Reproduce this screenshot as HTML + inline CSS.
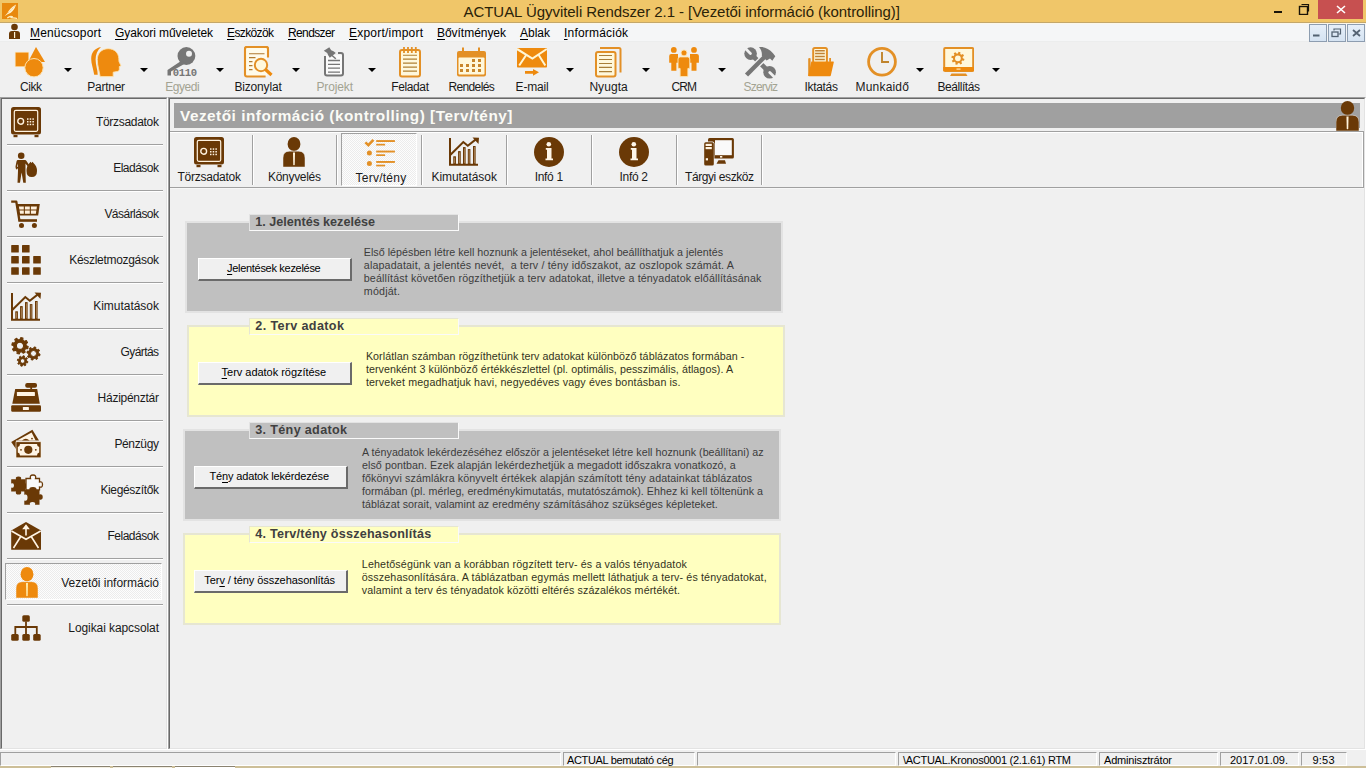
<!DOCTYPE html><html><head><meta charset="utf-8"><style>
*{margin:0;padding:0;box-sizing:border-box}
html,body{width:1366px;height:768px;overflow:hidden;background:#f0f0f0;font-family:"Liberation Sans",sans-serif;color:#000}
.a{position:absolute;display:block}
.t{position:absolute;white-space:pre;line-height:1}
.arr{position:absolute;width:0;height:0;border-left:4px solid transparent;border-right:4px solid transparent;border-top:4px solid #000}
</style></head><body>
<div class="a" style="left:0;top:0;width:1366px;height:22px;background:#f0c669"></div>
<div class="a" style="left:0;top:22px;width:1366px;height:1px;background:#c4a76a"></div>
<div class="a" style="left:0;top:23px;width:1366px;height:1px;background:#fcf7ea"></div>
<svg class="a" style="left:2px;top:3px" width="16" height="16" viewBox="0 0 16 16"><rect x="0" y="0" width="16" height="16" fill="#e8890e"/><path d="M2.5 13.2 L5.5 10 C6.5 7.5 9.5 4 14 1.5 C13.3 4.5 11.5 7.5 8.8 9.8 L5.2 11.4 Z" fill="#fff3cf"/><path d="M6.3 9.6 L12.6 3.2" stroke="#eaa040" stroke-width="0.7" stroke-dasharray="1.2 1.6"/><path d="M5.3 15 C6.8 13.6 8.6 13 10.2 13.6 C9.6 14.3 9 14.6 8.5 14.8 C11 15 13 14.7 15.2 15.4" stroke="#fff0c0" stroke-width="1.1" fill="none"/></svg>
<div class="t" style="left:463.50px;top:4.10px;font-size:15px;color:#2a2208;letter-spacing:-0.049px;">ACTUAL Ügyviteli Rendszer 2.1 - [Vezetői információ (kontrolling)]</div>
<div class="a" style="left:1274px;top:11px;width:8px;height:2px;background:#1a1408"></div>
<svg class="a" style="left:1298px;top:3px" width="12" height="12" viewBox="0 0 12 12"><rect x="1.5" y="3.5" width="8" height="8" fill="none" stroke="#1a1408" stroke-width="1.4"/><path d="M3.5 1.5 H10.5 V8.5" fill="none" stroke="#1a1408" stroke-width="1.2"/></svg>
<div class="a" style="left:1318px;top:0;width:45px;height:19px;background:#c75050"></div>
<svg class="a" style="left:1336px;top:5px" width="10" height="9" viewBox="0 0 10 9"><path d="M1 1 L9 8 M9 1 L1 8" stroke="#fff" stroke-width="1.6"/></svg>
<div class="a" style="left:0;top:24px;width:1366px;height:17px;background:#f5f6f7"></div>
<div class="a" style="left:0;top:41px;width:1366px;height:1px;background:#eceded"></div>
<svg class="a" style="left:9px;top:23px" width="12" height="17" viewBox="0 0 12 17"><circle cx="5.5" cy="4" r="3.3" fill="#6a3906"/><path d="M0 16 V11 Q0 8 3 8 H8 Q11 8 11 11 V16 Z" fill="#6a3906"/><rect x="5" y="9" width="1.2" height="6" fill="#fff4d8"/></svg>
<div class="t" style="left:30px;top:27.14px;font-size:12px;letter-spacing:0.163px"><span style="text-decoration:underline;text-underline-offset:2px">M</span>enücsoport</div>
<div class="t" style="left:115px;top:27.14px;font-size:12px;letter-spacing:-0.086px"><span style="text-decoration:underline;text-underline-offset:2px">G</span>yakori műveletek</div>
<div class="t" style="left:227px;top:27.14px;font-size:12px;letter-spacing:-0.622px"><span style="text-decoration:underline;text-underline-offset:2px">E</span>szközök</div>
<div class="t" style="left:288px;top:27.14px;font-size:12px;letter-spacing:-0.622px"><span style="text-decoration:underline;text-underline-offset:2px">R</span>endszer</div>
<div class="t" style="left:349px;top:27.14px;font-size:12px;letter-spacing:0.220px"><span style="text-decoration:underline;text-underline-offset:2px">E</span>xport/import</div>
<div class="t" style="left:437px;top:27.14px;font-size:12px;letter-spacing:-0.036px"><span style="text-decoration:underline;text-underline-offset:2px">B</span>ővítmények</div>
<div class="t" style="left:520px;top:27.14px;font-size:12px;letter-spacing:-0.004px"><span style="text-decoration:underline;text-underline-offset:2px">A</span>blak</div>
<div class="t" style="left:564px;top:27.14px;font-size:12px;letter-spacing:0.198px"><span style="text-decoration:underline;text-underline-offset:2px">I</span>nformációk</div>
<div class="a" style="left:1309px;top:24px;width:18px;height:18px;border:1px solid #8d9db0;background:linear-gradient(#e6eff9,#d5e3f2)"></div>
<div class="a" style="left:1328px;top:24px;width:18px;height:18px;border:1px solid #8d9db0;background:linear-gradient(#e6eff9,#d5e3f2)"></div>
<div class="a" style="left:1347px;top:24px;width:18px;height:18px;border:1px solid #8d9db0;background:linear-gradient(#e6eff9,#d5e3f2)"></div>
<svg class="a" style="left:1313px;top:34px" width="8" height="3" viewBox="0 0 8 3"><rect x="0" y="0.5" width="6.5" height="2" fill="#536272"/></svg>
<svg class="a" style="left:1331px;top:28px" width="11" height="10" viewBox="0 0 11 10"><rect x="1" y="4" width="6" height="4.5" fill="none" stroke="#536272" stroke-width="1.3"/><path d="M3 2.5 V1 H9.5 V6 H7.5" fill="none" stroke="#536272" stroke-width="1.2"/></svg>
<svg class="a" style="left:1352px;top:29px" width="9" height="8" viewBox="0 0 9 8"><path d="M1 1 L8 7 M8 1 L1 7" stroke="#536272" stroke-width="1.8"/></svg>
<div class="t" style="left:20.00px;top:80.74px;font-size:12px;color:#1a1a1a;letter-spacing:-0.444px;">Cikk</div>
<div class="t" style="left:87.30px;top:80.74px;font-size:12px;color:#1a1a1a;letter-spacing:-0.259px;">Partner</div>
<div class="t" style="left:165.20px;top:80.74px;font-size:12px;color:#a3a392;letter-spacing:-0.418px;">Egyedi</div>
<div class="t" style="left:234.40px;top:80.74px;font-size:12px;color:#1a1a1a;letter-spacing:-0.161px;">Bizonylat</div>
<div class="t" style="left:316.50px;top:80.74px;font-size:12px;color:#a3a392;letter-spacing:-0.141px;">Projekt</div>
<div class="t" style="left:391.30px;top:80.74px;font-size:12px;color:#1a1a1a;letter-spacing:-0.388px;">Feladat</div>
<div class="t" style="left:448.40px;top:80.74px;font-size:12px;color:#1a1a1a;letter-spacing:-0.614px;">Rendelés</div>
<div class="t" style="left:515.60px;top:80.74px;font-size:12px;color:#1a1a1a;letter-spacing:-0.200px;">E-mail</div>
<div class="t" style="left:589.40px;top:80.74px;font-size:12px;color:#1a1a1a;letter-spacing:0.056px;">Nyugta</div>
<div class="t" style="left:671.40px;top:80.74px;font-size:12px;color:#1a1a1a;letter-spacing:-0.914px;">CRM</div>
<div class="t" style="left:743.50px;top:80.74px;font-size:12px;color:#a3a392;letter-spacing:-0.790px;">Szerviz</div>
<div class="t" style="left:804.50px;top:80.74px;font-size:12px;color:#1a1a1a;letter-spacing:-0.325px;">Iktatás</div>
<div class="t" style="left:855.50px;top:80.74px;font-size:12px;color:#1a1a1a;letter-spacing:0.196px;">Munkaidő</div>
<div class="t" style="left:937.50px;top:80.74px;font-size:12px;color:#1a1a1a;letter-spacing:-0.441px;">Beállítás</div>
<div class="arr" style="left:64px;top:68px"></div>
<div class="arr" style="left:140px;top:68px"></div>
<div class="arr" style="left:216px;top:68px"></div>
<div class="arr" style="left:292px;top:68px"></div>
<div class="arr" style="left:368px;top:68px"></div>
<div class="arr" style="left:566px;top:68px"></div>
<div class="arr" style="left:642px;top:68px"></div>
<div class="arr" style="left:718px;top:68px"></div>
<div class="arr" style="left:916px;top:68px"></div>
<div class="arr" style="left:992px;top:68px"></div>
<svg class="a" style="left:14px;top:46px" width="32" height="32" viewBox="0 0 32 32"><rect x="1.2" y="6.2" width="13.6" height="14.5" fill="#ee8a0e" stroke="#fde2ae" stroke-width="0.6"/><path d="M22 1 L31 16 L14 16 Z" fill="#ee8a0e"/><circle cx="20" cy="21.7" r="9.2" fill="#ee8a0e" stroke="#fde2ae" stroke-width="1"/></svg>
<svg class="a" style="left:90px;top:46px" width="32" height="32" viewBox="0 0 32 32"><path d="M4.2 28.7 C3 22 1.2 17.5 1.2 13 C1.2 6 5 2.2 11 1 C7.5 4.2 5.6 8.5 5.6 13.5 C5.6 19 7.7 24 7.7 28.7 Z" fill="#ee8a0e"/><path d="M10.1 30.6 C9.6 26 7.3 20 7.3 13.5 C7.3 6.8 12 2.7 18.2 2.7 C24.6 2.7 28.6 7 28.8 12.5 L29 15.6 L31 19.8 L29.3 20.6 L29.4 23.2 C29.1 25 27.6 25.7 26 25.7 L23.2 26.2 V30.6 Z" fill="#ee8a0e" stroke="#fde2ae" stroke-width="0.9"/></svg>
<svg class="a" style="left:166px;top:46px" width="32" height="32" viewBox="0 0 32 32"><circle cx="20.4" cy="10" r="8.9" fill="#767676"/><circle cx="23" cy="7.8" r="3" fill="#f0f0f0"/><path d="M15 15 L1.5 24 V29.5 H5 V25.5 L20 17 Z" fill="#767676"/><text x="6.8" y="29.9" font-family="Liberation Mono" font-weight="bold" font-size="10.6" fill="#767676" letter-spacing="-0.4">0110</text></svg>
<svg class="a" style="left:243px;top:46px" width="32" height="32" viewBox="0 0 32 32"><path d="M2 3 Q2 1 4 1 H23.5 Q25 1 25 3 V10" fill="none" stroke="#e39026" stroke-width="2"/><path d="M3 2 H24 V30 H3 Z" fill="#fffbea"/><path d="M25 11.6 V3 Q25 1 23 1 H4 Q2 1 2 3 V28.5 Q2 30.5 4 30.5 H22.6" fill="none" stroke="#e39026" stroke-width="2.1"/><path d="M6 7.7 H21.5 M6 11.6 H12.5 M6 15.6 H9.5 M6 19.6 H9.5 M6 23.6 H9.5" stroke="#b07a30" stroke-width="1.1"/><circle cx="18" cy="19" r="6.2" fill="#fff8dc" stroke="#e39026" stroke-width="2"/><path d="M22.5 23.5 L28.5 29" stroke="#ee8a0e" stroke-width="3.2"/></svg>
<svg class="a" style="left:323px;top:46px" width="24" height="32" viewBox="0 0 24 32"><path d="M3 9 H19 V28.6 H3 Z" fill="#fbfbfb"/><path d="M2 10 V27.6 Q2 29.6 4 29.6 H18 Q20 29.6 20 27.6 V9 Q20 7 18 7 H15" fill="none" stroke="#767676" stroke-width="2"/><path d="M5 14.5 H17 M5 18.3 H17 M5 22.2 H17 M5 26.2 H17" stroke="#767676" stroke-width="1.3"/><path d="M0.8 4.8 L6.3 1.2 L8.2 4.2 L10.5 5.2 L12.8 6.9 L6.8 11.8 L5.3 9.4 L4.2 7 Z" fill="#767676"/><path d="M8.5 9 L12.8 12.8" stroke="#767676" stroke-width="1.5"/></svg>
<svg class="a" style="left:398px;top:46px" width="24" height="32" viewBox="0 0 24 32"><rect x="2" y="4" width="20" height="26.5" rx="2" fill="#fff8dc" stroke="#e39026" stroke-width="2"/><path d="M6 1 V7 M10 1 V7 M13.8 1 V7 M17.8 1 V7" stroke="#e39026" stroke-width="1.8"/><path d="M5 9.25 H19 M5 13.2 H19 M5 17.2 H19 M5 21.2 H19 M5 25.2 H19" stroke="#b08032" stroke-width="1.2"/></svg>
<svg class="a" style="left:455px;top:46px" width="32" height="32" viewBox="0 0 32 32"><rect x="2" y="5" width="29" height="25.5" rx="2" fill="#e39026"/><rect x="3.5" y="11.5" width="26" height="17" rx="1" fill="#fff8dc"/><path d="M8 1.5 V7 M24 1.5 V7" stroke="#e39026" stroke-width="2" /><path d="M8 1.5 V7 M24 1.5 V7" stroke="#fde8b8" stroke-width="3.2" opacity="0"/><rect x="17" y="13" width="3" height="3" fill="#c8862c"/><rect x="23" y="13" width="3" height="3" fill="#c8862c"/><rect x="5" y="18" width="3" height="3" fill="#c8862c"/><rect x="11" y="18" width="3" height="3" fill="#c8862c"/><rect x="17" y="18" width="3" height="3" fill="#c8862c"/><rect x="23" y="18" width="3" height="3" fill="#c8862c"/><rect x="5" y="23" width="3" height="3" fill="#c8862c"/><rect x="11" y="23" width="3" height="3" fill="#c8862c"/><rect x="17" y="23" width="3" height="3" fill="#c8862c"/><rect x="23" y="23" width="3" height="3" fill="#c8862c"/></svg>
<svg class="a" style="left:516px;top:46px" width="32" height="32" viewBox="0 0 32 32"><rect x="1" y="2" width="30" height="19.5" rx="0.8" fill="#ee8a0e"/><path d="M1 3 L16.4 12.6 L30.8 3" fill="none" stroke="#fff6d6" stroke-width="2.1"/><path d="M3.2 19.5 L10.2 9 M29.3 19.5 L22.7 9" stroke="#fff6d6" stroke-width="2"/><path d="M9 25 H17 V23 L23 26.3 L17 29.8 V27.7 H9 Z" fill="#ee8a0e"/></svg>
<svg class="a" style="left:594px;top:46px" width="28" height="32" viewBox="0 0 28 32"><path d="M6 2 H25 Q26.5 2 26.5 3.5 V26.5" fill="none" stroke="#e39026" stroke-width="2"/><rect x="2" y="6" width="19.5" height="24.5" rx="2" fill="#fff8dc" stroke="#e39026" stroke-width="2"/><path d="M5 9.5 H18 M5 13.5 H18 M5 17.5 H18 M5 21.4 H18 M5 25.7 H18" stroke="#a87e38" stroke-width="1.2"/></svg>
<svg class="a" style="left:668px;top:46px" width="32" height="32" viewBox="0 0 32 32"><circle cx="5.8" cy="3.9" r="2.9" fill="#ee8a0e"/><circle cx="26" cy="3.9" r="2.9" fill="#ee8a0e"/><path d="M1.2 10 Q1.2 8 3.2 8 H10 V16.75 H8.4 V24.7 H3.3 V16.75 H1.2 Z" fill="#ee8a0e"/><path d="M30.9 10 Q30.9 8 28.9 8 H22 V16.75 H23.5 V24.7 H28.5 V16.75 H30.9 Z" fill="#ee8a0e"/><circle cx="16" cy="6.9" r="3" fill="#ee8a0e" stroke="#fde6b8" stroke-width="0.9"/><path d="M10 13 Q10 10.9 12.2 10.9 H19.6 Q21.8 10.9 21.8 13 V22.4 H19.9 V30.6 H12.1 V22.4 H10 Z" fill="#ee8a0e" stroke="#fde6b8" stroke-width="0.9"/></svg>
<svg class="a" style="left:740px;top:44px" width="40" height="36" viewBox="0 0 40 36"><path d="M12 11 L28.5 27.5" stroke="#767676" stroke-width="4.6"/><circle cx="10.6" cy="9.6" r="6.3" fill="#767676"/><circle cx="29.6" cy="28.2" r="6.3" fill="#767676"/><path d="M4.5 3.6 L10.4 9.4 M35.8 34.4 L29.8 28.4" stroke="#f0f0f0" stroke-width="2.8" stroke-linecap="round"/><path d="M6.5 31 L24.5 13" stroke="#f0f0f0" stroke-width="7"/><path d="M6.5 31 L24.5 13" stroke="#767676" stroke-width="4.4"/><path d="M19 3.2 C24 2.3 29 5 33 9.3 L35.3 12.3 L32.3 16.8 L30 14.4 L26.6 16.4 L21.8 11.8 C22.2 8.5 21.3 5.5 19 3.2 Z" fill="#767676"/></svg>
<svg class="a" style="left:806px;top:46px" width="32" height="32" viewBox="0 0 32 32"><rect x="7.2" y="2" width="13.7" height="15" rx="1.5" fill="#fff8dc" stroke="#e39026" stroke-width="2"/><path d="M9.1 4.75 H18.8 M9.1 7.6 H18.8 M9.1 10.5 H18.8 M9.1 13.4 H18.8" stroke="#c08236" stroke-width="1.5"/><path d="M2.2 12.6 Q3.4 11.6 4.6 12.4 V30 H2.2 Z" fill="#e39026"/><rect x="23.2" y="12" width="1.8" height="3.8" fill="#e39026"/><path d="M5.3 15.4 H27.2 Q28 15.4 27.8 16.2 L24.8 29.6 Q24.6 30.2 24 30.2 H3 Q2.2 30.2 2.3 29.4 Z" fill="#ee8a0e"/></svg>
<svg class="a" style="left:866px;top:46px" width="32" height="32" viewBox="0 0 32 32"><circle cx="16" cy="15.8" r="13.4" fill="none" stroke="#e39026" stroke-width="2.8"/><path d="M16 6 V16 H23" fill="none" stroke="#c0842c" stroke-width="1.9"/></svg>
<svg class="a" style="left:942px;top:46px" width="32" height="32" viewBox="0 0 32 32"><rect x="2.2" y="2" width="29" height="23" rx="1" fill="#fff8dc" stroke="#e39026" stroke-width="2"/><rect x="1.2" y="21" width="31" height="4.2" fill="#ee8a0e"/><rect x="14.5" y="22.5" width="4" height="1.2" fill="#ffe6b0"/><path d="M9.5 27.5 H24 L25.5 30 H8 Z" fill="#e39026"/><path d="M20.80 12.30 L22.47 12.92 L21.99 14.85 L20.22 14.61 L19.36 15.76 L20.11 17.39 L18.40 18.41 L17.32 16.99 L15.90 17.20 L15.28 18.87 L13.35 18.39 L13.59 16.62 L12.44 15.76 L10.81 16.51 L9.79 14.80 L11.21 13.72 L11.00 12.30 L9.33 11.68 L9.81 9.75 L11.58 9.99 L12.44 8.84 L11.69 7.21 L13.40 6.19 L14.48 7.61 L15.90 7.40 L16.52 5.73 L18.45 6.21 L18.21 7.98 L19.36 8.84 L20.99 8.09 L22.01 9.80 L20.59 10.88 Z M18.80 12.30 A2.9 2.9 0 1 0 13.00 12.30 A2.9 2.9 0 1 0 18.80 12.30 Z" fill="#e39026" fill-rule="evenodd" stroke="#e39026" stroke-width="0" stroke-linejoin="round"/></svg>
<div class="a" style="left:0;top:97px;width:168px;height:653px;border-top:1px solid #a0a0a0;border-left:1px solid #a0a0a0;border-right:1px solid #fff;border-bottom:1px solid #fff"><div style="width:100%;height:100%;border-top:1px solid #696969;border-left:1px solid #696969;border-right:1px solid #e3e3e3;border-bottom:1px solid #e3e3e3"></div></div>
<div class="a" style="left:168px;top:97px;width:1198px;height:653px;border-top:1px solid #a0a0a0;border-left:1px solid #a0a0a0;border-right:1px solid #fff;border-bottom:1px solid #fff"><div style="width:100%;height:100%;border-top:1px solid #696969;border-left:1px solid #696969;border-right:1px solid #e3e3e3;border-bottom:1px solid #e3e3e3"></div></div>
<div class="a" style="left:0;top:749px;width:1366px;height:1px;background:#fff"></div>
<div class="a" style="left:7px;top:144px;width:156px;height:1px;background:#a0a0a0"></div><div class="a" style="left:7px;top:145px;width:156px;height:1px;background:#fff"></div>
<div class="a" style="left:7px;top:190px;width:156px;height:1px;background:#a0a0a0"></div><div class="a" style="left:7px;top:191px;width:156px;height:1px;background:#fff"></div>
<div class="a" style="left:7px;top:236px;width:156px;height:1px;background:#a0a0a0"></div><div class="a" style="left:7px;top:237px;width:156px;height:1px;background:#fff"></div>
<div class="a" style="left:7px;top:282px;width:156px;height:1px;background:#a0a0a0"></div><div class="a" style="left:7px;top:283px;width:156px;height:1px;background:#fff"></div>
<div class="a" style="left:7px;top:328px;width:156px;height:1px;background:#a0a0a0"></div><div class="a" style="left:7px;top:329px;width:156px;height:1px;background:#fff"></div>
<div class="a" style="left:7px;top:374px;width:156px;height:1px;background:#a0a0a0"></div><div class="a" style="left:7px;top:375px;width:156px;height:1px;background:#fff"></div>
<div class="a" style="left:7px;top:420px;width:156px;height:1px;background:#a0a0a0"></div><div class="a" style="left:7px;top:421px;width:156px;height:1px;background:#fff"></div>
<div class="a" style="left:7px;top:466px;width:156px;height:1px;background:#a0a0a0"></div><div class="a" style="left:7px;top:467px;width:156px;height:1px;background:#fff"></div>
<div class="a" style="left:7px;top:512px;width:156px;height:1px;background:#a0a0a0"></div><div class="a" style="left:7px;top:513px;width:156px;height:1px;background:#fff"></div>
<div class="a" style="left:7px;top:558px;width:156px;height:1px;background:#a0a0a0"></div><div class="a" style="left:7px;top:559px;width:156px;height:1px;background:#fff"></div>
<div class="a" style="left:7px;top:604px;width:156px;height:1px;background:#a0a0a0"></div><div class="a" style="left:7px;top:605px;width:156px;height:1px;background:#fff"></div>
<div class="a" style="left:5px;top:563px;width:157px;height:37px;border-top:1px solid #a0a0a0;border-left:1px solid #a0a0a0;border-right:1px solid #fff;border-bottom:1px solid #fff;background:repeating-conic-gradient(#fdfdfd 0 25%,#ececec 0 50%) 0 0/2px 2px"></div>
<div class="t" style="left:95.90px;top:115.74px;font-size:12px;color:#1a1a1a;letter-spacing:-0.293px;">Törzsadatok</div>
<div class="t" style="left:113.20px;top:161.74px;font-size:12px;color:#1a1a1a;letter-spacing:-0.509px;">Eladások</div>
<div class="t" style="left:104.40px;top:207.74px;font-size:12px;color:#1a1a1a;letter-spacing:-0.529px;">Vásárlások</div>
<div class="t" style="left:69.30px;top:253.74px;font-size:12px;color:#1a1a1a;letter-spacing:-0.310px;">Készletmozgások</div>
<div class="t" style="left:93.20px;top:299.74px;font-size:12px;color:#1a1a1a;letter-spacing:-0.023px;">Kimutatások</div>
<div class="t" style="left:120.60px;top:345.74px;font-size:12px;color:#1a1a1a;letter-spacing:-0.602px;">Gyártás</div>
<div class="t" style="left:97.60px;top:391.74px;font-size:12px;color:#1a1a1a;letter-spacing:-0.263px;">Házipénztár</div>
<div class="t" style="left:114.40px;top:437.74px;font-size:12px;color:#1a1a1a;letter-spacing:-0.350px;">Pénzügy</div>
<div class="t" style="left:100.40px;top:483.74px;font-size:12px;color:#1a1a1a;letter-spacing:-0.343px;">Kiegészítők</div>
<div class="t" style="left:107.40px;top:529.74px;font-size:12px;color:#1a1a1a;letter-spacing:-0.471px;">Feladások</div>
<div class="t" style="left:61.30px;top:576.54px;font-size:12px;color:#1a1a1a;letter-spacing:-0.021px;">Vezetői információ</div>
<div class="t" style="left:68.30px;top:621.74px;font-size:12px;color:#1a1a1a;letter-spacing:-0.085px;">Logikai kapcsolat</div>
<svg class="a" style="left:11px;top:107px" width="31" height="31" viewBox="0 0 31 31"><rect x="0" y="0" width="30" height="27.5" rx="2.5" fill="#6a3906"/><rect x="2.5" y="28" width="4" height="2.2" fill="#6a3906"/><rect x="23.5" y="28" width="4" height="2.2" fill="#6a3906"/><rect x="3.3" y="3.3" width="23.4" height="21" rx="1.5" fill="none" stroke="#fff3e0" stroke-width="1.2"/><circle cx="9.7" cy="14.3" r="2.9" fill="none" stroke="#fff3e0" stroke-width="1.4"/><rect x="16.0" y="11.3" width="1.5" height="1.5" fill="#fff3e0"/><rect x="16.0" y="14.0" width="1.5" height="1.5" fill="#fff3e0"/><rect x="16.0" y="16.7" width="1.5" height="1.5" fill="#fff3e0"/><rect x="18.7" y="11.3" width="1.5" height="1.5" fill="#fff3e0"/><rect x="18.7" y="14.0" width="1.5" height="1.5" fill="#fff3e0"/><rect x="18.7" y="16.7" width="1.5" height="1.5" fill="#fff3e0"/><rect x="21.4" y="11.3" width="1.5" height="1.5" fill="#fff3e0"/><rect x="21.4" y="14.0" width="1.5" height="1.5" fill="#fff3e0"/><rect x="21.4" y="16.7" width="1.5" height="1.5" fill="#fff3e0"/></svg>
<svg class="a" style="left:6px;top:144px" width="40" height="46" viewBox="0 0 40 46"><circle cx="15.2" cy="11.7" r="3.3" fill="#6a3906"/><path d="M11.5 16 H19 Q20 16 20.5 17 L23.5 21.5 L22 22.8 L19.5 19.5 V27 L19.8 38.7 H17.3 L15.6 28.5 L14 38.7 H11.5 L12 27 V24 L10.8 25.8 Q9.2 24.5 9.5 22.5 L10.5 17.5 Q10.8 16 11.5 16 Z M11.5 19.5 L11 22.5 L12 23 Z" fill="#6a3906" fill-rule="evenodd"/><path d="M23.5 19 L24.5 17.8 L25.5 19 L26.5 17.8 L27.5 19 Q31 22 31 27 Q31 33 25.8 33 Q20.5 33 20.5 27 Q20.5 22 23.5 19 Z" fill="#6a3906"/></svg>
<svg class="a" style="left:6px;top:190px" width="40" height="46" viewBox="0 0 40 46"><path d="M5.2 11.7 H10.3 L13.4 30.5" fill="none" stroke="#6a3906" stroke-width="2.3" stroke-linejoin="round"/><path d="M10.9 14 H33.8 L32.2 25.5 H12.9 Z" fill="#6a3906"/><path d="M12.9 16.6 H17.8 V19.5 H13.4 Z M18.9 16.6 H23.8 V19.5 H18.9 Z M24.9 16.6 H30.9 L30.5 19.5 H24.9 Z M13.6 20.6 H17.8 V23.8 H14.1 Z M18.9 20.6 H23.8 V23.8 H18.9 Z M24.9 20.6 H30.3 L29.9 23.8 H24.9 Z" fill="#fff0dc"/><rect x="12.3" y="29.2" width="18.7" height="2.6" fill="#6a3906"/><circle cx="15.5" cy="35.5" r="2.5" fill="#6a3906"/><circle cx="28.4" cy="35.5" r="2.5" fill="#6a3906"/></svg>
<svg class="a" style="left:6px;top:236px" width="40" height="46" viewBox="0 0 40 46"><rect x="5.2" y="8.9" width="7.6" height="7.6" rx="0.6" fill="#6a3906"/><rect x="16" y="8.9" width="7.6" height="7.6" rx="0.6" fill="#6a3906"/><rect x="5.2" y="20" width="7.6" height="7.6" rx="0.6" fill="#6a3906"/><rect x="16" y="20" width="7.6" height="7.6" rx="0.6" fill="#6a3906"/><rect x="27.2" y="20" width="7.6" height="7.6" rx="0.6" fill="#6a3906"/><rect x="5.2" y="31.2" width="7.6" height="7.6" rx="0.6" fill="#6a3906"/><rect x="16" y="31.2" width="7.6" height="7.6" rx="0.6" fill="#6a3906"/><rect x="27.2" y="31.2" width="7.6" height="7.6" rx="0.6" fill="#6a3906"/></svg>
<svg class="a" style="left:11.2px;top:292.9px;overflow:visible" width="31" height="28" viewBox="0 0 31 28"><path d="M1 0 V26.8 H29" fill="none" stroke="#6a3906" stroke-width="2"/><rect x="4.8" y="18.8" width="1.6" height="7.2" fill="#c9a27a" stroke="#6a3906" stroke-width="1"/><rect x="9.6" y="13.6" width="1.6" height="12.4" fill="#c9a27a" stroke="#6a3906" stroke-width="1"/><rect x="14.5" y="9.6" width="1.6" height="16.4" fill="#c9a27a" stroke="#6a3906" stroke-width="1"/><rect x="19.3" y="11.6" width="1.6" height="14.4" fill="#c9a27a" stroke="#6a3906" stroke-width="1"/><rect x="24.5" y="8.5" width="1.6" height="17.5" fill="#c9a27a" stroke="#6a3906" stroke-width="1"/><path d="M1.5 16.8 L14.3 4 L18.8 7.7 L27.5 0.9" fill="none" stroke="#6a3906" stroke-width="2"/><path d="M23.5 -0.5 L30 -0.3 L29.5 6 Z" fill="#6a3906"/></svg>
<svg class="a" style="left:6px;top:328px" width="40" height="46" viewBox="0 0 40 46"><path d="M20.30 17.80 L22.16 18.57 L21.65 20.76 L19.64 20.62 L18.45 22.25 L19.23 24.12 L17.32 25.30 L15.99 23.78 L14.00 24.10 L13.23 25.96 L11.04 25.45 L11.18 23.44 L9.55 22.25 L7.68 23.03 L6.50 21.12 L8.02 19.79 L7.70 17.80 L5.84 17.03 L6.35 14.84 L8.36 14.98 L9.55 13.35 L8.77 11.48 L10.68 10.30 L12.01 11.82 L14.00 11.50 L14.77 9.64 L16.96 10.15 L16.82 12.16 L18.45 13.35 L20.32 12.57 L21.50 14.48 L19.98 15.81 Z M17.60 17.80 A3.6 3.6 0 1 0 10.40 17.80 A3.6 3.6 0 1 0 17.60 17.80 Z" fill="#6a3906" fill-rule="evenodd" stroke="#6a3906" stroke-width="1.1" stroke-linejoin="round"/><path d="M32.50 25.50 L34.07 26.12 L33.66 27.88 L31.97 27.73 L31.04 29.04 L31.71 30.59 L30.17 31.54 L29.08 30.24 L27.50 30.50 L26.88 32.07 L25.12 31.66 L25.27 29.97 L23.96 29.04 L22.41 29.71 L21.46 28.17 L22.76 27.08 L22.50 25.50 L20.93 24.88 L21.34 23.12 L23.03 23.27 L23.96 21.96 L23.29 20.41 L24.83 19.46 L25.92 20.76 L27.50 20.50 L28.12 18.93 L29.88 19.34 L29.73 21.03 L31.04 21.96 L32.59 21.29 L33.54 22.83 L32.24 23.92 Z M30.50 25.50 A3.0 3.0 0 1 0 24.50 25.50 A3.0 3.0 0 1 0 30.50 25.50 Z" fill="#6a3906" fill-rule="evenodd" stroke="#6a3906" stroke-width="1.0" stroke-linejoin="round"/><path d="M20.60 33.00 L21.88 33.50 L21.54 34.91 L20.18 34.79 L19.43 35.83 L19.98 37.08 L18.74 37.85 L17.87 36.79 L16.60 37.00 L16.10 38.28 L14.69 37.94 L14.81 36.58 L13.77 35.83 L12.52 36.38 L11.75 35.14 L12.81 34.27 L12.60 33.00 L11.32 32.50 L11.66 31.09 L13.02 31.21 L13.77 30.17 L13.22 28.92 L14.46 28.15 L15.33 29.21 L16.60 29.00 L17.10 27.72 L18.51 28.06 L18.39 29.42 L19.43 30.17 L20.68 29.62 L21.45 30.86 L20.39 31.73 Z M18.90 33.00 A2.3 2.3 0 1 0 14.30 33.00 A2.3 2.3 0 1 0 18.90 33.00 Z" fill="#6a3906" fill-rule="evenodd" stroke="#6a3906" stroke-width="0.9" stroke-linejoin="round"/></svg>
<svg class="a" style="left:6px;top:374px" width="40" height="46" viewBox="0 0 40 46"><rect x="19.2" y="8.9" width="11.8" height="4.8" rx="2" fill="#6a3906"/><rect x="24.3" y="13" width="1.8" height="2.5" fill="#6a3906"/><path d="M9.2 14.9 H31.2 L33.8 29.8 H6.3 Z" fill="#6a3906"/><rect x="10.9" y="18" width="18" height="4" rx="0.5" fill="#fff4e4"/><rect x="5.2" y="31.2" width="29.8" height="6.6" rx="1.2" fill="#6a3906"/><rect x="16.9" y="33" width="6" height="3" rx="0.5" fill="#fff4e4"/></svg>
<svg class="a" style="left:6px;top:420px" width="40" height="46" viewBox="0 0 40 46"><path d="M5.2 22 L26.4 9.7 L33 20.6 L10 20.6 L10 29 Z" fill="#6a3906"/><path d="M11 20.6 L25.6 12.6 L29.6 20.6 Z" fill="#fff4e4"/><path d="M10.8 20.4 L25.6 12.4 L28 16.2 Z" fill="#6a3906" opacity="0"/><path d="M16 20.6 Q19.8 16.8 23.6 20.6 Z" fill="#6a3906"/><circle cx="26" cy="18.6" r="0.9" fill="#6a3906"/><rect x="10" y="21.8" width="25" height="16" fill="#6a3906" stroke="#fff4e4" stroke-width="0.6"/><path d="M14 24 H31 Q31 26.5 33.2 27 V32.6 Q31 33.1 31 35.6 H14 Q14 33.1 11.8 32.6 V27 Q14 26.5 14 24 Z" fill="#fff4e4"/><circle cx="22.3" cy="29.8" r="4.1" fill="#6a3906"/><circle cx="15" cy="29.8" r="0.9" fill="#6a3906"/><circle cx="29.8" cy="29.8" r="0.9" fill="#6a3906"/></svg>
<svg class="a" style="left:6px;top:466px" width="40" height="46" viewBox="0 0 40 46"><path d="M5.2 13.2 H10 Q9 10.5 12.5 10.5 Q16 10.5 15 13.2 H19.5 V17.5 Q22.5 16.5 22.5 20 Q22.5 23.5 19.5 22.5 V25.5 H15 Q16 28.6 12.5 28.6 Q9 28.6 10 25.5 H5.2 V21.5 Q8 22.5 8 19.5 Q8 16.5 5.2 17.5 Z" fill="#6a3906"/><path d="M20 12.5 H24.5 Q23.5 9 27 9 Q30.5 9 29.5 12.5 H33.5 V16 Q36.5 15 36.5 18.5 Q36.5 22 33.5 21 V23.8 H20 Z" fill="#fafafa" stroke="#6a3906" stroke-width="1.3"/><path d="M18.3 24 H23.5 Q22.5 21 27 21 Q31 21 30.5 24 H33.5 V28.5 Q36.8 27.5 36.8 31 Q36.8 34.5 33.5 33.5 V38.7 H29 Q30 36 26.5 36 Q23 36 24 38.7 H18.3 V34.5 Q21.5 35.5 21.5 31.5 Q21.5 27.8 18.3 28.8 Z" fill="#6a3906"/></svg>
<svg class="a" style="left:6px;top:512px" width="40" height="46" viewBox="0 0 40 46"><path d="M5.2 18.6 L20 10 L35 18.6 V37.8 H5.2 Z" fill="#6a3906"/><path d="M5.5 19 L20 27.3 L34.7 19" fill="none" stroke="#fff4e4" stroke-width="1.6"/><path d="M7.5 36 L14.8 24.5 M32.5 36 L25.2 24.5" stroke="#fff4e4" stroke-width="1.6"/><path d="M19.2 16.5 H20.8 V23.5 H19.2 Z M16.2 17.3 L20 12.2 L23.8 17.3 Z" fill="#fff4e4"/></svg>
<svg class="a" style="left:16px;top:567px" width="22" height="31" viewBox="0 0 24 30" preserveAspectRatio="none"><circle cx="12" cy="7" r="7" fill="#ee8a0e"/><path d="M0 30 V21 Q0 14.2 7 14.2 H17 Q24 14.2 24 21 V30 Z" fill="#ee8a0e" stroke="#f0f0f0" stroke-width="0.5"/><path d="M10.9 15.5 H13.1 L12.8 27.5 L12 28.5 L11.2 27.5 Z" fill="#ffe9a8"/></svg>
<svg class="a" style="left:6px;top:604px" width="40" height="46" viewBox="0 0 40 46"><rect x="16.3" y="11.2" width="7.5" height="6.6" rx="1.5" fill="#6a3906"/><path d="M20 17.5 V31 M9.3 31 V23 H30.8 V31" fill="none" stroke="#6a3906" stroke-width="1.8"/><rect x="5.2" y="30.1" width="7.5" height="6.6" rx="1.5" fill="#6a3906"/><rect x="16.3" y="30.1" width="7.5" height="6.6" rx="1.5" fill="#6a3906"/><rect x="27.2" y="30.1" width="7.5" height="6.6" rx="1.5" fill="#6a3906"/></svg>
<div class="a" style="left:174px;top:103px;width:1186px;height:25px;background:#a0a0a0"></div>
<div class="t" style="left:180.00px;top:107.85px;font-size:15.3px;color:#fbfbf6;letter-spacing:0.522px;font-weight:bold;">Vezetői információ (kontrolling) [Terv/tény]</div>
<div class="a" style="left:170px;top:131px;width:1194px;height:1px;background:#a0a0a0"></div>
<div class="a" style="left:170px;top:132px;width:1194px;height:1px;background:#fff"></div>
<div class="a" style="left:170px;top:187px;width:1194px;height:1px;background:#a0a0a0"></div>
<div class="a" style="left:170px;top:188px;width:1194px;height:1px;background:#f7f7f7"></div>
<div class="a" style="left:1362px;top:132px;width:1px;height:55px;background:#fff"></div>
<div class="a" style="left:1363px;top:131px;width:1px;height:57px;background:#a0a0a0"></div>
<div class="a" style="left:252px;top:135px;width:1px;height:50px;background:#a0a0a0"></div><div class="a" style="left:253px;top:135px;width:1px;height:50px;background:#fff"></div>
<div class="a" style="left:336px;top:135px;width:1px;height:50px;background:#a0a0a0"></div><div class="a" style="left:337px;top:135px;width:1px;height:50px;background:#fff"></div>
<div class="a" style="left:421px;top:135px;width:1px;height:50px;background:#a0a0a0"></div><div class="a" style="left:422px;top:135px;width:1px;height:50px;background:#fff"></div>
<div class="a" style="left:506px;top:135px;width:1px;height:50px;background:#a0a0a0"></div><div class="a" style="left:507px;top:135px;width:1px;height:50px;background:#fff"></div>
<div class="a" style="left:591px;top:135px;width:1px;height:50px;background:#a0a0a0"></div><div class="a" style="left:592px;top:135px;width:1px;height:50px;background:#fff"></div>
<div class="a" style="left:676px;top:135px;width:1px;height:50px;background:#a0a0a0"></div><div class="a" style="left:677px;top:135px;width:1px;height:50px;background:#fff"></div>
<div class="a" style="left:761px;top:135px;width:1px;height:50px;background:#a0a0a0"></div><div class="a" style="left:762px;top:135px;width:1px;height:50px;background:#fff"></div>
<div class="a" style="left:341px;top:133px;width:76px;height:53px;border-top:1px solid #a0a0a0;border-left:1px solid #a0a0a0;border-right:1px solid #fff;border-bottom:1px solid #fff;background:repeating-conic-gradient(#fdfdfd 0 25%,#ececec 0 50%) 0 0/2px 2px"></div>
<div class="t" style="left:177.50px;top:170.84px;font-size:12px;color:#1a1a1a;letter-spacing:-0.253px;">Törzsadatok</div>
<div class="t" style="left:268.00px;top:170.84px;font-size:12px;color:#1a1a1a;letter-spacing:-0.296px;">Könyvelés</div>
<div class="t" style="left:355.50px;top:171.84px;font-size:12px;color:#1a1a1a;letter-spacing:0.252px;">Terv/tény</div>
<div class="t" style="left:431.50px;top:170.84px;font-size:12px;color:#1a1a1a;letter-spacing:-0.063px;">Kimutatások</div>
<div class="t" style="left:534.80px;top:170.84px;font-size:12px;color:#1a1a1a;letter-spacing:-0.345px;">Infó 1</div>
<div class="t" style="left:619.50px;top:170.84px;font-size:12px;color:#1a1a1a;letter-spacing:-0.305px;">Infó 2</div>
<div class="t" style="left:685.00px;top:170.84px;font-size:12px;color:#1a1a1a;letter-spacing:-0.410px;">Tárgyi eszköz</div>
<svg class="a" style="left:194px;top:137px" width="31" height="31" viewBox="0 0 31 31"><rect x="0" y="0" width="30" height="27.5" rx="2.5" fill="#6a3906"/><rect x="2.5" y="28" width="4" height="2.2" fill="#6a3906"/><rect x="23.5" y="28" width="4" height="2.2" fill="#6a3906"/><rect x="3.3" y="3.3" width="23.4" height="21" rx="1.5" fill="none" stroke="#fff3e0" stroke-width="1.2"/><circle cx="9.7" cy="14.3" r="2.9" fill="none" stroke="#fff3e0" stroke-width="1.4"/><rect x="16.0" y="11.3" width="1.5" height="1.5" fill="#fff3e0"/><rect x="16.0" y="14.0" width="1.5" height="1.5" fill="#fff3e0"/><rect x="16.0" y="16.7" width="1.5" height="1.5" fill="#fff3e0"/><rect x="18.7" y="11.3" width="1.5" height="1.5" fill="#fff3e0"/><rect x="18.7" y="14.0" width="1.5" height="1.5" fill="#fff3e0"/><rect x="18.7" y="16.7" width="1.5" height="1.5" fill="#fff3e0"/><rect x="21.4" y="11.3" width="1.5" height="1.5" fill="#fff3e0"/><rect x="21.4" y="14.0" width="1.5" height="1.5" fill="#fff3e0"/><rect x="21.4" y="16.7" width="1.5" height="1.5" fill="#fff3e0"/></svg>
<svg class="a" style="left:283px;top:137px" width="22" height="30" viewBox="0 0 24 30" preserveAspectRatio="none"><circle cx="12" cy="7" r="7" fill="#6a3906"/><path d="M0 30 V21 Q0 14.2 7 14.2 H17 Q24 14.2 24 21 V30 Z" fill="#6a3906" stroke="#f0f0f0" stroke-width="0.5"/><path d="M10.9 15.5 H13.1 L12.8 27.5 L12 28.5 L11.2 27.5 Z" fill="#fff3dc"/></svg>
<svg class="a" style="left:360px;top:134px" width="40" height="36" viewBox="0 0 40 36"><path d="M5.4 8.4 L8.4 11.25 L13.4 5.9" fill="none" stroke="#e39026" stroke-width="2.6"/><rect x="16.2" y="6.1" width="18.7" height="1.9" fill="#e39026"/><rect x="16.2" y="9.8" width="8.9" height="1.7" fill="#e39026"/><rect x="16.2" y="16.6" width="18.7" height="1.9" fill="#e39026"/><rect x="16.2" y="20.3" width="8.9" height="1.7" fill="#e39026"/><rect x="16.2" y="27" width="18.7" height="1.9" fill="#e39026"/><rect x="16.2" y="30.7" width="8.9" height="1.7" fill="#e39026"/><circle cx="9.4" cy="19" r="2.5" fill="#e39026"/><circle cx="9.4" cy="29.5" r="2.5" fill="#e39026"/></svg>
<svg class="a" style="left:448.9px;top:137.7px;overflow:visible" width="31" height="28" viewBox="0 0 31 28"><path d="M1 0 V26.8 H29" fill="none" stroke="#6a3906" stroke-width="2"/><rect x="4.8" y="18.8" width="1.6" height="7.2" fill="#c9a27a" stroke="#6a3906" stroke-width="1"/><rect x="9.6" y="13.6" width="1.6" height="12.4" fill="#c9a27a" stroke="#6a3906" stroke-width="1"/><rect x="14.5" y="9.6" width="1.6" height="16.4" fill="#c9a27a" stroke="#6a3906" stroke-width="1"/><rect x="19.3" y="11.6" width="1.6" height="14.4" fill="#c9a27a" stroke="#6a3906" stroke-width="1"/><rect x="24.5" y="8.5" width="1.6" height="17.5" fill="#c9a27a" stroke="#6a3906" stroke-width="1"/><path d="M1.5 16.8 L14.3 4 L18.8 7.7 L27.5 0.9" fill="none" stroke="#6a3906" stroke-width="2"/><path d="M23.5 -0.5 L30 -0.3 L29.5 6 Z" fill="#6a3906"/></svg>
<svg class="a" style="left:533.9px;top:136.8px" width="30" height="30" viewBox="0 0 30 30"><circle cx="15" cy="15" r="15" fill="#6a3906"/><circle cx="14.8" cy="7.2" r="2.3" fill="#fff6e8"/><path d="M11.8 11 H17.5 V21.5 H19 V23.3 H11.5 V21.5 H13 V12.8 H11.8 Z" fill="#fff6e8"/></svg>
<svg class="a" style="left:619px;top:136.8px" width="30" height="30" viewBox="0 0 30 30"><circle cx="15" cy="15" r="15" fill="#6a3906"/><circle cx="14.8" cy="7.2" r="2.3" fill="#fff6e8"/><path d="M11.8 11 H17.5 V21.5 H19 V23.3 H11.5 V21.5 H13 V12.8 H11.8 Z" fill="#fff6e8"/></svg>
<svg class="a" style="left:699px;top:134px" width="40" height="36" viewBox="0 0 40 36"><rect x="9" y="4" width="25.9" height="20.6" rx="1.5" fill="#6a3906"/><rect x="16" y="6.2" width="16.8" height="15" fill="#fafafa"/><rect x="16" y="4" width="0" height="0"/><rect x="4.6" y="7.6" width="10.8" height="24.4" rx="2" fill="#f0f0f0"/><rect x="5.2" y="8.2" width="9.6" height="23.2" rx="1.5" fill="#6a3906"/><rect x="6.6" y="9.8" width="6.2" height="2.2" fill="#fff4e4"/><rect x="6.6" y="13" width="6.2" height="2.2" fill="#fff4e4"/><rect x="6.8" y="24.2" width="2.2" height="2.2" fill="#fff4e4"/><rect x="21" y="22" width="2.3" height="1.6" fill="#fff4e4"/><path d="M19.5 26.3 H26 L27 29.8 H17.5 Z" fill="#6a3906"/></svg>
<svg class="a" style="left:1336px;top:101px" width="23" height="30" viewBox="0 0 24 30" preserveAspectRatio="none"><circle cx="12" cy="7" r="7" fill="#6a3906"/><path d="M0 30 V21 Q0 14.2 7 14.2 H17 Q24 14.2 24 21 V30 Z" fill="#6a3906" stroke="#f0f0f0" stroke-width="0.5"/><path d="M10.9 15.5 H13.1 L12.8 27.5 L12 28.5 L11.2 27.5 Z" fill="#fff3dc"/></svg>
<div class="a" style="left:185px;top:221px;width:598px;height:92px;background:#c0c0c0;border:2px solid #e3e3e3"></div>
<div class="a" style="left:249px;top:214px;width:210px;height:17px;background:#c0c0c0;border-top:1px solid #e3e3e3;border-left:1px solid #e3e3e3;border-right:1px solid #fafafa;border-bottom:1px solid #fafafa"></div>
<div class="t" style="left:255.30px;top:215.83px;font-size:12.6px;color:#404040;letter-spacing:-0.007px;font-weight:bold;">1. Jelentés kezelése</div>
<div class="a" style="left:198px;top:258px;width:154px;height:23px;background:#f0f0f0;border-top:1px solid #fff;border-left:1px solid #fff;border-right:2px solid #6a6a6a;border-bottom:2px solid #6a6a6a"></div>
<div class="t" style="left:363.80px;top:246.54px;font-size:10.7px;color:#3c3c3c;letter-spacing:0.028px;">Első lépésben létre kell hoznunk a jelentéseket, ahol beállíthatjuk a jelentés</div>
<div class="t" style="left:363.80px;top:259.54px;font-size:10.7px;color:#3c3c3c;letter-spacing:0.153px;">alapadatait, a jelentés nevét,  a terv / tény időszakot, az oszlopok számát. A</div>
<div class="t" style="left:363.80px;top:272.54px;font-size:10.7px;color:#3c3c3c;letter-spacing:0.128px;">beállítást követően rögzíthetjük a terv adatokat, illetve a tényadatok előállításának</div>
<div class="t" style="left:363.80px;top:285.54px;font-size:10.7px;color:#3c3c3c;letter-spacing:0.192px;">módját.</div>
<div class="a" style="left:187px;top:325px;width:598px;height:92px;background:#ffffc0;border:2px solid #e6e6d2"></div>
<div class="a" style="left:249px;top:318px;width:210px;height:17px;background:#ffffc0;border-top:1px solid #e6e6d2;border-left:1px solid #e6e6d2;border-right:1px solid #fafafa;border-bottom:1px solid #fafafa"></div>
<div class="t" style="left:255.30px;top:319.83px;font-size:12.6px;color:#404040;letter-spacing:0.372px;font-weight:bold;">2. Terv adatok</div>
<div class="a" style="left:198px;top:362px;width:154px;height:23px;background:#f0f0f0;border-top:1px solid #fff;border-left:1px solid #fff;border-right:2px solid #6a6a6a;border-bottom:2px solid #6a6a6a"></div>
<div class="t" style="left:365.90px;top:350.64px;font-size:10.7px;color:#333322;letter-spacing:0.072px;">Korlátlan számban rögzíthetünk terv adatokat különböző táblázatos formában -</div>
<div class="t" style="left:365.90px;top:363.64px;font-size:10.7px;color:#333322;letter-spacing:0.061px;">tervenként 3 különböző értékkészlettel (pl. optimális, pesszimális, átlagos). A</div>
<div class="t" style="left:365.90px;top:376.64px;font-size:10.7px;color:#333322;letter-spacing:0.145px;">terveket megadhatjuk havi, negyedéves vagy éves bontásban is.</div>
<div class="a" style="left:183px;top:429px;width:598px;height:92px;background:#c0c0c0;border:2px solid #e3e3e3"></div>
<div class="a" style="left:249px;top:422px;width:210px;height:17px;background:#c0c0c0;border-top:1px solid #e3e3e3;border-left:1px solid #e3e3e3;border-right:1px solid #fafafa;border-bottom:1px solid #fafafa"></div>
<div class="t" style="left:255.30px;top:423.83px;font-size:12.6px;color:#404040;letter-spacing:0.324px;font-weight:bold;">3. Tény adatok</div>
<div class="a" style="left:194px;top:466px;width:154px;height:23px;background:#f0f0f0;border-top:1px solid #fff;border-left:1px solid #fff;border-right:2px solid #6a6a6a;border-bottom:2px solid #6a6a6a"></div>
<div class="t" style="left:362.00px;top:446.74px;font-size:10.7px;color:#3c3c3c;letter-spacing:0.028px;">A tényadatok lekérdezéséhez először a jelentéseket létre kell hoznunk (beállítani) az</div>
<div class="t" style="left:362.00px;top:459.74px;font-size:10.7px;color:#3c3c3c;letter-spacing:0.063px;">első pontban. Ezek alapján lekérdezhetjük a megadott időszakra vonatkozó, a</div>
<div class="t" style="left:362.00px;top:472.74px;font-size:10.7px;color:#3c3c3c;letter-spacing:0.104px;">főkönyvi számlákra könyvelt értékek alapján számított tény adatainkat táblázatos</div>
<div class="t" style="left:362.00px;top:485.74px;font-size:10.7px;color:#3c3c3c;letter-spacing:0.038px;">formában (pl. mérleg, eredménykimutatás, mutatószámok). Ehhez ki kell töltenünk a</div>
<div class="t" style="left:362.00px;top:498.74px;font-size:10.7px;color:#3c3c3c;letter-spacing:0.025px;">táblázat sorait, valamint az eredmény számításához szükséges képleteket.</div>
<div class="a" style="left:183px;top:533px;width:598px;height:92px;background:#ffffc0;border:2px solid #e6e6d2"></div>
<div class="a" style="left:249px;top:526px;width:210px;height:17px;background:#ffffc0;border-top:1px solid #e6e6d2;border-left:1px solid #e6e6d2;border-right:1px solid #fafafa;border-bottom:1px solid #fafafa"></div>
<div class="t" style="left:255.30px;top:527.83px;font-size:12.6px;color:#404040;letter-spacing:0.224px;font-weight:bold;">4. Terv/tény összehasonlítás</div>
<div class="a" style="left:194px;top:570px;width:154px;height:23px;background:#f0f0f0;border-top:1px solid #fff;border-left:1px solid #fff;border-right:2px solid #6a6a6a;border-bottom:2px solid #6a6a6a"></div>
<div class="t" style="left:361.80px;top:558.54px;font-size:10.7px;color:#333322;letter-spacing:0.141px;">Lehetőségünk van a korábban rögzített terv- és a valós tényadatok</div>
<div class="t" style="left:361.80px;top:571.54px;font-size:10.7px;color:#333322;letter-spacing:0.127px;">összehasonlítására. A táblázatban egymás mellett láthatjuk a terv- és tényadatokat,</div>
<div class="t" style="left:361.80px;top:584.54px;font-size:10.7px;color:#333322;letter-spacing:0.107px;">valamint a terv és tényadatok közötti eltérés százalékos mértékét.</div>
<div class="t" style="left:227px;top:263.29px;font-size:11px;letter-spacing:-0.298px;color:#000"><span style="text-decoration:underline;text-underline-offset:1.5px">J</span>elentések kezelése</div>
<div class="t" style="left:221.6px;top:367.29px;font-size:11px;letter-spacing:-0.028px;color:#000"><span style="text-decoration:underline;text-underline-offset:1.5px">T</span>erv adatok rögzítése</div>
<div class="t" style="left:209.5px;top:471.29px;font-size:11px;letter-spacing:-0.155px;color:#000">Té<span style="text-decoration:underline;text-underline-offset:1.5px">n</span>y adatok lekérdezése</div>
<div class="t" style="left:204.3px;top:575.29px;font-size:11px;letter-spacing:-0.072px;color:#000">Ter<span style="text-decoration:underline;text-underline-offset:1.5px">v</span> / tény összehasonlítás</div>
<div class="a" style="left:0px;top:752px;width:561px;height:14px;border-top:1px solid #a0a0a0;border-left:1px solid #a0a0a0;border-right:1px solid #fff;border-bottom:1px solid #fff"></div>
<div class="a" style="left:563px;top:752px;width:132px;height:14px;border-top:1px solid #a0a0a0;border-left:1px solid #a0a0a0;border-right:1px solid #fff;border-bottom:1px solid #fff"></div>
<div class="a" style="left:697px;top:752px;width:199px;height:14px;border-top:1px solid #a0a0a0;border-left:1px solid #a0a0a0;border-right:1px solid #fff;border-bottom:1px solid #fff"></div>
<div class="a" style="left:898px;top:752px;width:199px;height:14px;border-top:1px solid #a0a0a0;border-left:1px solid #a0a0a0;border-right:1px solid #fff;border-bottom:1px solid #fff"></div>
<div class="a" style="left:1099px;top:752px;width:119px;height:14px;border-top:1px solid #a0a0a0;border-left:1px solid #a0a0a0;border-right:1px solid #fff;border-bottom:1px solid #fff"></div>
<div class="a" style="left:1220px;top:752px;width:79px;height:14px;border-top:1px solid #a0a0a0;border-left:1px solid #a0a0a0;border-right:1px solid #fff;border-bottom:1px solid #fff"></div>
<div class="a" style="left:1301px;top:752px;width:46px;height:14px;border-top:1px solid #a0a0a0;border-left:1px solid #a0a0a0;border-right:1px solid #fff;border-bottom:1px solid #fff"></div>
<div class="t" style="left:567.00px;top:755.49px;font-size:11px;color:#000;letter-spacing:-0.339px;">ACTUAL bemutató cég</div>
<div class="t" style="left:903.00px;top:755.49px;font-size:11px;color:#000;letter-spacing:-0.283px;">\ACTUAL.Kronos0001 (2.1.61) RTM</div>
<div class="t" style="left:1104.00px;top:755.49px;font-size:11px;color:#000;letter-spacing:-0.177px;">Adminisztrátor</div>
<div class="t" style="left:1230.00px;top:755.49px;font-size:11px;color:#000;letter-spacing:-0.011px;">2017.01.09.</div>
<div class="t" style="left:1312.50px;top:755.49px;font-size:11px;color:#000;letter-spacing:0.197px;">9:53</div>
<div class="a" style="left:0;top:766px;width:1366px;height:2px;background:#cdbf98"></div>
<div class="a" style="left:51px;top:766px;width:59px;height:2px;background:#f3efe2;border-top:1px solid #8a8270"></div>
<div class="a" style="left:113px;top:766px;width:59px;height:2px;background:#f3efe2;border-top:1px solid #8a8270"></div>
<div class="a" style="left:175px;top:766px;width:60px;height:2px;background:#ffffff;border-top:1px solid #8a8270"></div>
</body></html>
